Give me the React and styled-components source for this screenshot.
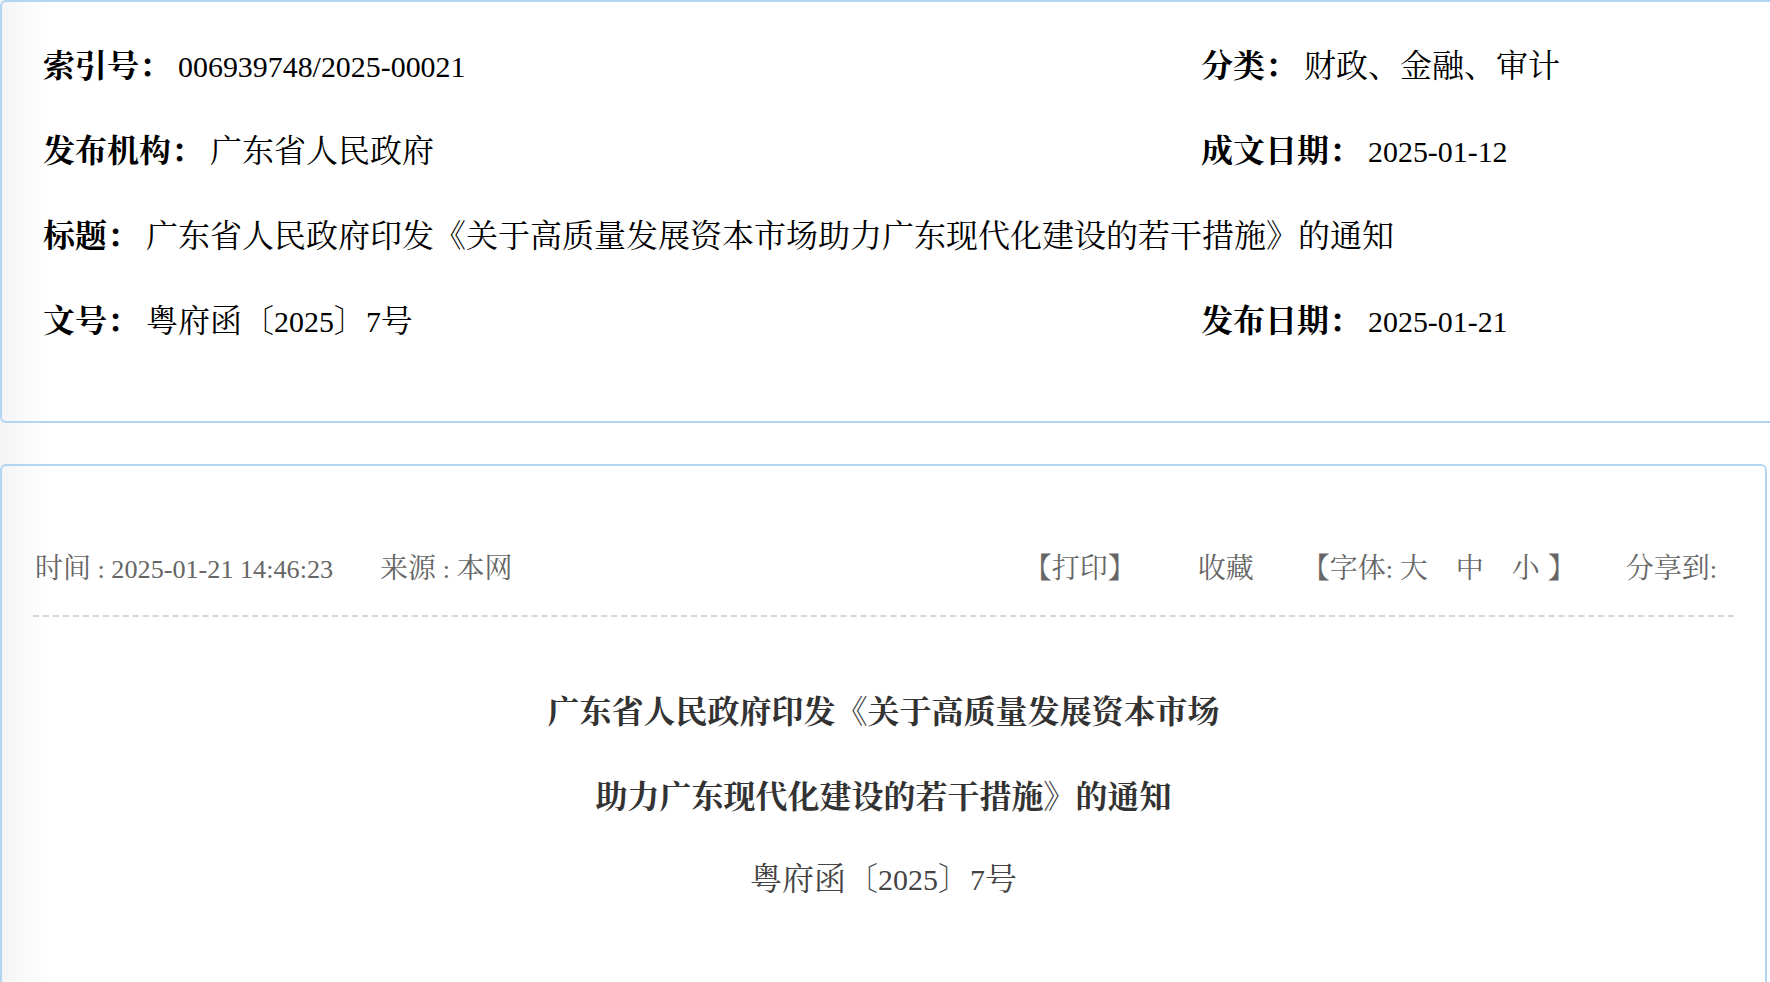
import React from 'react'
import styled, { createGlobalStyle } from 'styled-components'

const GlobalStyle = createGlobalStyle`
  html, body {
    margin:0;
    padding:0;
  }
  body {
    background:linear-gradient(90deg, #f4f4f4 0, #fff 46px);
    font-family:"Liberation Serif", "Noto Serif CJK SC", "Noto Sans CJK SC", serif;
    overflow:hidden;
  }
`

// latin glyphs in the original run a touch smaller than the CJK ones
const Latin = styled.span`
    font-size:0.935em;
`

const infoRows = [
    { label: '索引号', value: <Latin>006939748/2025-00021</Latin> },
    { label: '分类', value: '财政、金融、审计' },
    { label: '发布机构', value: '广东省人民政府' },
    { label: '成文日期', value: <Latin>2025-01-12</Latin> },
    { label: '标题', value: '广东省人民政府印发《关于高质量发展资本市场助力广东现代化建设的若干措施》的通知', wide: true },
    { label: '文号', value: <>粤府函〔<Latin>2025</Latin>〕<Latin>7</Latin>号</> },
    { label: '发布日期', value: <Latin>2025-01-21</Latin> },
]

function App() {
    return (
        <>
            <GlobalStyle />
            <InfoPanel>
                {infoRows.map((row) => (
                    <Field key={row.label} $wide={row.wide}>
                        <Label>{row.label}：</Label>
                        <Value>{row.value}</Value>
                    </Field>
                ))}
            </InfoPanel>
            <ArticlePanel>
                <Meta>
                    <MetaGroup>
                        <MetaItem $space="47px">时间<Latin> : 2025-01-21 14:46:23</Latin></MetaItem>
                        <MetaItem>来源<Latin> : </Latin>本网</MetaItem>
                    </MetaGroup>
                    <MetaGroup>
                        <MetaItem $space="62px">【打印】</MetaItem>
                        <MetaItem $space="48px">收藏</MetaItem>
                        <MetaItem $space="50px">
                            【字体<Latin>: </Latin><SizeLink>大</SizeLink><SizeLink>中</SizeLink><SizeLink>小</SizeLink>】
                        </MetaItem>
                        <MetaItem>分享到<Latin>:</Latin></MetaItem>
                    </MetaGroup>
                </Meta>
                <Title>
                    广东省人民政府印发《关于高质量发展资本市场<br />
                    助力广东现代化建设的若干措施》的通知
                </Title>
                <DocNo>粤府函〔<Latin>2025</Latin>〕<Latin>7</Latin>号</DocNo>
            </ArticlePanel>
        </>
    )
}

const InfoPanel = styled.section`
    border:2px solid #b2d5f2;
    border-right:0;
    border-radius:6px 0 0 6px;
    padding:18px 0 61px 41px;
    display:grid;
    grid-template-columns:1158px 1fr;
    grid-auto-rows:85px;
    align-items:center;
    font-size:32px;
    color:#000;
`
const Field = styled.div`
    display:flex;
    align-items:baseline;
    gap:7px;
    white-space:nowrap;
    grid-column:${({ $wide }) => ($wide ? '1 / -1' : 'auto')};
`
const Label = styled.span`
    font-weight:bold;
`
const Value = styled.span`
    font-weight:normal;
`
const ArticlePanel = styled.section`
    margin:41px 3px 0 0;
    border:2px solid #b2d5f2;
    border-radius:6px;
    padding:0 31px;
    min-height:700px;
`
const Meta = styled.div`
    display:flex;
    justify-content:space-between;
    align-items:center;
    height:40px;
    padding:80px 17px 29px 2px;
    border-bottom:2px dashed #d6d6d6;
    font-size:28px;
    color:#666;
`
const MetaGroup = styled.div`
    display:flex;
    align-items:center;
`
const MetaItem = styled.span`
    margin-right:${({ $space }) => $space || '0'};
    white-space:nowrap;
`
const SizeLink = styled.span`
    margin-right:28px;
    &:last-child {
        margin-right:8px;
    }
`
const Title = styled.h1`
    margin:53px 0 0;
    text-align:center;
    font-size:32px;
    line-height:85px;
    font-weight:bold;
    color:#333;
`
const DocNo = styled.p`
    margin:0;
    text-align:center;
    font-size:32px;
    line-height:78px;
    color:#444;
`

export default App
